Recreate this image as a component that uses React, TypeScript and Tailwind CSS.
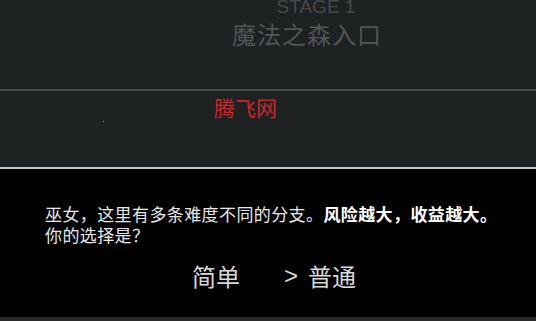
export default function App() {
  const cjk = { fontFamily: '"AR PL UKai CN", "Noto Sans CJK SC", sans-serif' };

  return (
    <div className="w-[536px] h-[321px] overflow-hidden flex flex-col bg-black">
      {/* stage header */}
      <div className="h-[89px] bg-[#1f2223] flex flex-col items-center pl-[78px] shrink-0">
        <div className="-mt-[3px] text-[19px] leading-[20px] text-[#45494b] font-['Liberation_Sans',sans-serif] pl-[18px]">
          STAGE 1
        </div>
        <div className="mt-[3px] text-[24px] leading-[28px] tracking-[1px] text-[#515557]" style={cjk}>
          魔法之森入口
        </div>
      </div>
      <div className="h-[2px] bg-[#4b4e4f] shrink-0" />

      {/* scene */}
      <div className="h-[76px] bg-[#1f2223] shrink-0 relative">
        <div className="pl-[214px] pt-[4px] text-[21px] leading-[24px] text-[#c4282b]" style={cjk}>
          腾飞网
        </div>
        <div className="absolute left-[103px] top-[30px] w-px h-px bg-[#a89a6a]" />
      </div>
      <div className="h-[2px] bg-[#c4c4c4] shrink-0" />

      {/* dialogue */}
      <div className="flex-1 bg-black text-white flex flex-col" style={cjk}>
        <div className="pl-[45px] pt-[34px] text-[17px] leading-[21px] tracking-[0.4px] text-[#e8e8e8]">
          <div>
            巫女，这里有多条难度不同的分支。<span className="font-bold text-white">风险越大，收益越大。</span>
          </div>
          <div>你的选择是？</div>
        </div>
        <div className="mt-[16px] flex items-center text-[24px] leading-[30px] text-[#d8d8d8]">
          <span className="ml-[192px]">简单</span>
          <span className="ml-[44px] font-['Liberation_Sans',sans-serif]">&gt;</span>
          <span className="ml-[10px]">普通</span>
        </div>
      </div>
      <div className="h-[4px] bg-[#2a2a2a] shrink-0" />
    </div>
  );
}
